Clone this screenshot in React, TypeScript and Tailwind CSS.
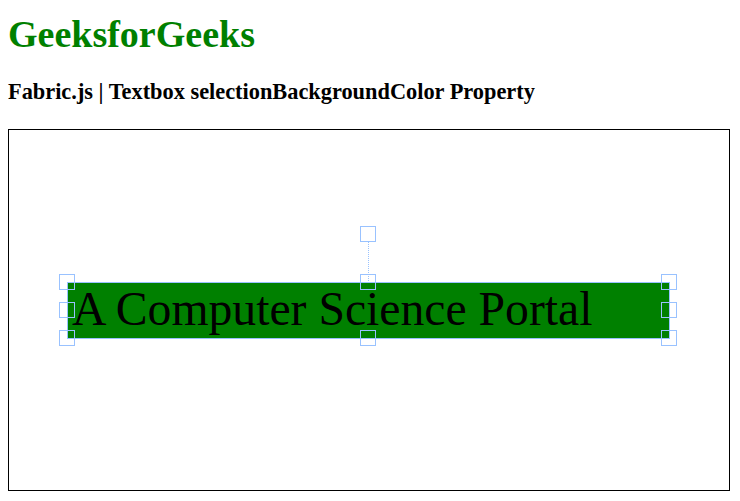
import React from 'react';

const handle = '#99c2ff';

const Handle: React.FC<{ x: number; y: number }> = ({ x, y }) => (
  <rect x={x + 0.5} y={y + 0.5} width={15} height={15} fill="none" stroke={handle} strokeWidth={1} />
);

const FabricCanvas: React.FC = () => {
  // box edges in canvas coords
  const left = 58;
  const top = 152;
  const right = 660;
  const bottom = 208;
  const midX = (left + right) / 2;
  const midY = (top + bottom) / 2;
  const h = 8;

  return (
    <div className="relative w-[722px] h-[362px] border border-black bg-white">
      {/* textbox with selectionBackgroundColor */}
      <div className="absolute left-[58px] top-[152px] w-[603px] h-[57px] bg-[#008000]">
        <span
          className="absolute left-[5px] top-[3px] whitespace-nowrap text-[47.7px] leading-[48px] text-black"
          style={{ fontFamily: '"Liberation Serif", "Times New Roman", serif' }}
        >
          A Computer Science Portal
        </span>
      </div>

      {/* selection border + controls */}
      <svg className="absolute left-0 top-0" width={720} height={360}>
        <rect x={left + 0.5} y={top + 0.5} width={right - left} height={bottom - top} fill="none" stroke={handle} strokeWidth={1} />
        <line x1={midX + 0.5} y1={top - 40} x2={midX + 0.5} y2={top} stroke={handle} strokeWidth={1} strokeDasharray="1 1" />
        <Handle x={left - h} y={top - h} />
        <Handle x={midX - h} y={top - h} />
        <Handle x={right - h} y={top - h} />
        <Handle x={left - h} y={midY - h} />
        <Handle x={right - h} y={midY - h} />
        <Handle x={left - h} y={bottom - h} />
        <Handle x={midX - h} y={bottom - h} />
        <Handle x={right - h} y={bottom - h} />
        <Handle x={midX - h} y={top - 56} />
      </svg>
    </div>
  );
};

export default function App() {
  return (
    <div
      className="w-[740px] h-[501px] bg-white px-[8px] overflow-hidden"
      style={{ fontFamily: '"Liberation Serif", "Times New Roman", serif' }}
    >
      <h1 className="mt-[15px] text-[38px] leading-[38px] font-bold text-[#008000]">GeeksforGeeks</h1>
      <h3 className="mt-[28px] text-[22.35px] leading-[22px] font-bold text-black">
        Fabric.js | Textbox selectionBackgroundColor Property
      </h3>
      <div className="mt-[26px]">
        <FabricCanvas />
      </div>
    </div>
  );
}
